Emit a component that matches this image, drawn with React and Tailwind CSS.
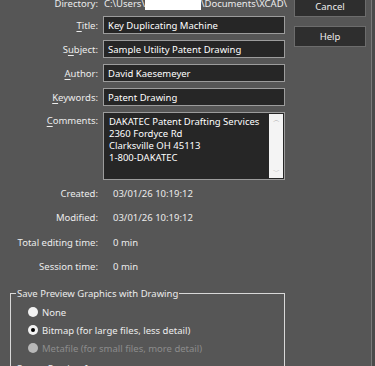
import React from "react";

const fields = [
  { pre: "", key: "T", post: "itle:", value: "Key Duplicating Machine" },
  { pre: "S", key: "u", post: "bject:", value: "Sample Utility Patent Drawing" },
  { pre: "", key: "A", post: "uthor:", value: "David Kaesemeyer" },
  { pre: "", key: "K", post: "eywords:", value: "Patent Drawing" },
];

const stats = [
  { label: "Created:", value: "03/01/26  10:19:12" },
  { label: "Modified:", value: "03/01/26  10:19:12" },
  { label: "Total editing time:", value: "0 min" },
  { label: "Session time:", value: "0 min" },
];

const Radio = ({ label, checked, disabled }) => (
  <div className="flex items-center h-[18px]">
    <span
      className={`w-[10px] h-[10px] rounded-full flex items-center justify-center ${
        disabled ? "bg-[#b8b8b8]" : "bg-[#f2f2f2]"
      }`}
    >
      {checked && <span className="w-[4px] h-[4px] rounded-full bg-black" />}
    </span>
    <span className={`ml-[4px] ${disabled ? "text-[#8c8c8c]" : "text-[#ededed]"}`}>
      {label}
    </span>
  </div>
);

export default function App() {
  return (
    <div
      className="w-[375px] h-[366px] overflow-hidden bg-[#565656] text-[#ececec] text-[9.5px] leading-[13px] flex whitespace-nowrap"
      style={{ fontFamily: '"Noto Sans", "Open Sans", sans-serif' }}
    >
      {/* left: properties */}
      <div className="w-[290px] mt-[-3px]">
        <div className="flex h-[13px]">
          <span className="w-[98px] text-right">Directory:</span>
          <span className="ml-[6px] flex">
            C:\Users\
            <span className="w-[56px] h-[10px] mt-[3px] bg-white" />
            \Documents\XCAD\
          </span>
        </div>

        <div className="mt-[6px] flex flex-col gap-[6px]">
          {fields.map((f) => (
            <div key={f.post} className="flex items-center h-[18px]">
              <span className="w-[98px] text-right">
                {f.pre}
                <u className="underline-offset-2">{f.key}</u>
                {f.post}
              </span>
              <div className="ml-[5px] w-[182px] h-[18px] bg-[#262626] border border-[#9c9c9c] px-[4px] flex items-center text-white">
                {f.value}
              </div>
            </div>
          ))}

          <div className="flex h-[68px]">
            <span className="w-[98px] text-right pt-[2px]">
              <u className="underline-offset-2">C</u>omments:
            </span>
            <div className="ml-[5px] w-[182px] h-[68px] bg-[#262626] border border-[#9c9c9c] flex">
              <div className="flex-1 pl-[5px] pt-[3px] leading-[12px] text-white">
                <div>DAKATEC Patent Drafting Services</div>
                <div>2360 Fordyce Rd</div>
                <div>Clarksville OH 45113</div>
                <div>1-800-DAKATEC</div>
              </div>
              <div className="w-[14px] my-[1px] mr-[1px] bg-[#f4f4f4] flex flex-col justify-between items-center text-[#a8a8a8] text-[7px] leading-[12px]">
                <span>︿</span>
                <span>﹀</span>
              </div>
            </div>
          </div>
        </div>

        <div className="mt-[1px] flex flex-col">
          {stats.map((s) => (
            <div key={s.label} className="flex items-center h-[24.5px]">
              <span className="w-[98px] text-right">{s.label}</span>
              <span className="ml-[15px]">{s.value}</span>
            </div>
          ))}
        </div>

        <div className="mt-[14px] ml-[10px] w-[275px] border border-[#d8d8d8] h-[90px] pl-[17px] pt-[10px]">
          <div className="-mt-[17px] -ml-[12px] mb-[3px] px-[1px] bg-[#565656] w-fit">
            Save Preview Graphics with Drawing
          </div>
          <Radio label="None" />
          <Radio label="Bitmap (for large files, less detail)" checked />
          <Radio label="Metafile (for small files, more detail)" disabled />
          <div className="mt-[5px] -ml-[12px]">Create Preview Image</div>
        </div>
      </div>

      {/* right: buttons */}
      <div className="ml-[4px] flex flex-col gap-[9px] mt-[-4px]">
        <button className="w-[72px] h-[21px] bg-[#2e2e2e] border border-[#6c6c6c] text-[#ededed]">
          Cancel
        </button>
        <button className="w-[72px] h-[21px] bg-[#2e2e2e] border border-[#6c6c6c] text-[#ededed]">
          Help
        </button>
      </div>

      <div className="ml-auto w-[4px] h-full border-l border-[#7a7a7a] bg-[#4a4a4a]" />
    </div>
  );
}
